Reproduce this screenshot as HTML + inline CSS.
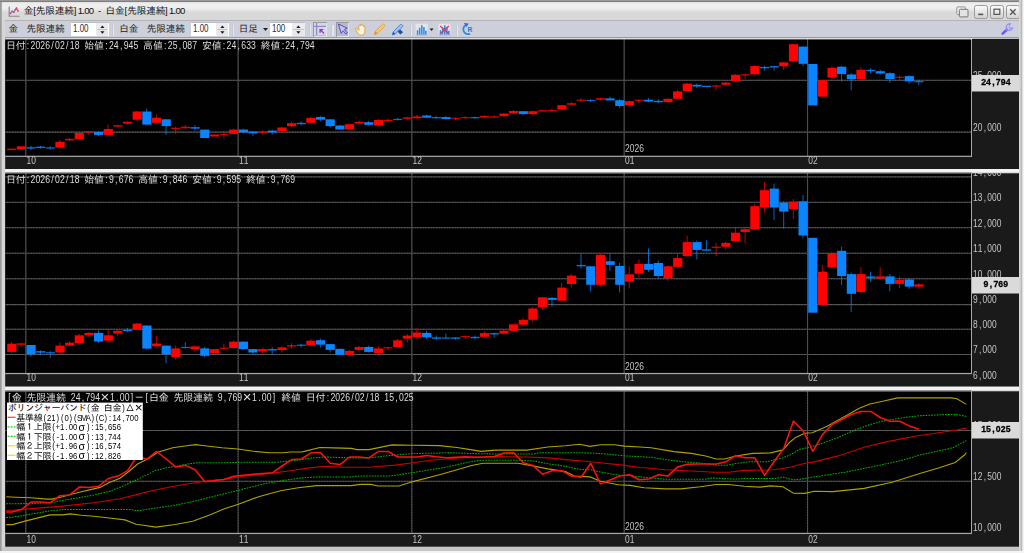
<!DOCTYPE html>
<html lang="ja"><head><meta charset="utf-8"><title>金[先限連続]1.00 - 白金[先限連続]1.00</title>
<style>
html,body{margin:0;padding:0}
body{width:1024px;height:553px;position:relative;overflow:hidden;background:#f4f4f4;font-family:"Liberation Sans","IPAGothic","Noto Sans CJK JP",sans-serif}
#win{position:absolute;left:0;top:0;width:1022.6px;height:550.8px;background:#d6d6d6;box-shadow:inset 1.7px 1.7px 0 #9a9a9a}
#win:after{content:"";position:absolute;right:0;top:0;bottom:0;width:3.6px;background:linear-gradient(90deg,#d8d8d8 0,#d4d4d4 35%,#a8a8a8 50%,#b8b8b8 62%,#dcdcdc 80%,#e6e6e6)}
#botb{position:absolute;left:1.7px;right:0;bottom:0;height:4px;background:#c6c6c6}
#title{position:absolute;left:1.7px;top:2px;width:1020.9px;height:17.8px;background:linear-gradient(#dcdcdc 0,#ececec 1.2px,#f0f0f0 5px,#eaeaea 7px,#d9d9d9 10.5px,#d8d8d8 100%)}
#topb{position:absolute;left:0;top:0;width:100%;height:2.1px;background:linear-gradient(#9c9c9c 0,#989898 45%,#7e7e7e 60%,#808080 90%,#b0b0b0)}
#tbar{position:absolute;left:4.5px;top:19.7px;width:1014.5px;height:18.2px;background:linear-gradient(#b2b2b4 0,#b6b6b8 0.9px,#cdd0da 1.4px,#cdd0da 17.1px,#909aa8 17.4px,#96a0ae 100%)}
.t{position:absolute;white-space:nowrap;line-height:1}
.m{font-family:"Liberation Mono","IPAGothic",monospace;font-size:9.6px;letter-spacing:-0.96px;color:#d8d8d8}
.m .j{letter-spacing:0}
.hd{color:#e4e4e4}
.ax{color:#c8c8c8;font-size:9.6px}
.ui{font-size:9.6px;color:#202020;letter-spacing:-0.1px}
.pb{position:absolute;left:972px;width:47px;background:#dadada;color:#000;font-family:"Liberation Mono","IPAGothic",monospace;font-weight:bold;font-size:9.8px;letter-spacing:-0.9px;text-align:center}
.lg{position:absolute;left:7px;top:402.6px;width:135.8px;height:57.4px;background:#fff}
.lr{position:absolute;white-space:nowrap;line-height:1;font-family:"Liberation Mono","IPAGothic",monospace;font-size:8.7px;letter-spacing:-0.87px;color:#000}
.lr .j{letter-spacing:0}
.sp{position:absolute;top:22.5px;height:13.4px;background:#fff;box-shadow:0 -0.7px 0 #b4b8c2}
.sp span{position:absolute;left:2.4px;top:0.3px;opacity:0.99;font-size:10.6px;line-height:1;color:#2a2a2a;transform:scaleX(0.75);transform-origin:0 0}
.n{letter-spacing:-0.75px;margin-left:1.3px}
.sb{position:absolute;top:23.5px;width:10.3px;height:11px;background:linear-gradient(#eeeeee 0,#e9e9e9 44%,#c4c4c4 47%,#c4c4c4 53%,#e9e9e9 56%,#e6e6e6 100%);box-shadow:0 0 0 0.5px #d4d4d4}
.sep{position:absolute;top:25.2px;width:1.3px;height:10.4px;background:#e4e7ee;box-shadow:-0.7px 0 0 #c2c6d0}
text.l{font-family:"Liberation Sans","IPAGothic",sans-serif}
text.j{font-family:"Liberation Sans","IPAGothic","Noto Sans CJK JP",sans-serif}
.wb{position:absolute;top:3.2px;width:13.4px;height:13.6px;border:0.8px solid #9a9a9a;border-radius:2.4px;background:linear-gradient(#fbfbfb,#d2d2d2);box-sizing:border-box}
.press{position:absolute;top:21.6px;height:15px;background:#b9bcc4;box-shadow:inset 0.8px 0.8px 0 #8e9098,inset -0.8px -0.8px 0 #eceef2}
</style></head><body>
<div id="win">
<div id="title">
 <svg style="position:absolute;left:6px;top:2.7px" width="13" height="13" viewBox="0 0 13 13"><path d="M1.2 1.5V11.2H11.5" fill="none" stroke="#888" stroke-width="1.15"/><path d="M2.2 8.6L4.2 6.2 5.8 7.2 8.4 3 10 5.8" fill="none" stroke="#3b8be0" stroke-width="1.1"/><g fill="#f0405a"><circle cx="2.4" cy="8.4" r="0.9"/><circle cx="4.2" cy="6.3" r="0.9"/><circle cx="5.8" cy="7.2" r="0.9"/><circle cx="7.3" cy="4.6" r="0.9"/><circle cx="8.5" cy="3.2" r="0.9"/><circle cx="10" cy="5.9" r="0.9"/></g></svg>
 <div class="t ui" id="ttl" style="left:22.1px;top:4.1px;color:#111">金[先限連続]<span class="n">1.00</span><span style="padding:0 1.9px 0 2.1px"> - </span>白金[先限連続]<span class="n">1.00</span></div>
 <svg style="position:absolute;left:954px;top:3.5px" width="14" height="13" viewBox="0 0 14 13"><rect x="0.8" y="0.9" width="8.6" height="7.6" rx="1" fill="#ececec" stroke="#8c8c8c" stroke-width="0.9"/><rect x="3.4" y="3.3" width="8.6" height="7.6" rx="1" fill="#e4e4e4" stroke="#777" stroke-width="1"/></svg>
 <div class="wb" style="left:972.6px"><svg width="12" height="12" style="position:absolute;left:0;top:0"><rect x="3.2" y="7.6" width="5" height="1.6" fill="#555"/></svg></div>
 <div class="wb" style="left:988.6px"><svg width="12" height="12" style="position:absolute;left:0;top:0"><rect x="3" y="3.2" width="5.8" height="5.2" fill="none" stroke="#555" stroke-width="1.2"/></svg></div>
 <div class="wb" style="left:1004.6px"><svg width="12" height="12" style="position:absolute;left:0;top:0"><path d="M3.2 3.2L8.6 8.8M8.6 3.2L3.2 8.8" stroke="#555" stroke-width="1.3"/></svg></div>
</div>
<div id="tbar"></div><div id="topb"></div>
<!-- toolbar items -->
<div class="t ui" style="left:8.6px;top:24.2px">金</div>
<div class="t ui" style="left:26.6px;top:24.2px">先限連続</div>
<div class="sp" style="left:70.8px;width:38px"><span>1.00</span></div>
<div class="sb" style="left:97.2px"><svg width="11" height="11" style="position:absolute;left:0;top:0"><path d="M3.3 4.1L5.4 1.5 7.5 4.1ZM3.3 7.2L5.4 9.8 7.5 7.2Z" fill="#1a1a1a"/></svg></div>
<div class="sep" style="left:113px"></div>
<div class="t ui" style="left:119.2px;top:24.2px">白金</div>
<div class="t ui" style="left:146.8px;top:24.2px">先限連続</div>
<div class="sp" style="left:190.6px;width:38px"><span>1.00</span></div>
<div class="sb" style="left:217px"><svg width="11" height="11" style="position:absolute;left:0;top:0"><path d="M3.3 4.1L5.4 1.5 7.5 4.1ZM3.3 7.2L5.4 9.8 7.5 7.2Z" fill="#1a1a1a"/></svg></div>
<div class="sep" style="left:233px"></div>
<div class="t ui" style="left:238.8px;top:24.2px">日足</div>
<svg style="position:absolute;left:261.5px;top:26.6px" width="7" height="5"><path d="M1 1H6L3.5 4Z" fill="#222"/></svg>
<div class="sp" style="left:270px;width:35px"><span>100</span></div>
<div class="sb" style="left:293.4px"><svg width="11" height="11" style="position:absolute;left:0;top:0"><path d="M3.3 4.1L5.4 1.5 7.5 4.1ZM3.3 7.2L5.4 9.8 7.5 7.2Z" fill="#1a1a1a"/></svg></div>
<div class="sep" style="left:309.6px"></div>
<div class="press" style="left:312.6px;width:14.4px"></div>
<svg style="position:absolute;left:313px;top:22px" width="14" height="14" viewBox="0 0 14 14"><rect x="1" y="1" width="12" height="12" fill="#d6d9e2"/><path d="M3.6 1V13M1 4.4H13" stroke="#8c8ad0" stroke-width="1.3"/><path d="M6.4 7H10.2V8.2H8.6L11.4 11 10.5 11.9 7.7 9.1V10.8H6.4Z" fill="#9a32c8"/></svg>
<div class="sep" style="left:332.4px"></div>
<div class="press" style="left:335.6px;width:13.6px"></div>
<svg style="position:absolute;left:336px;top:22px" width="14" height="14" viewBox="0 0 14 14"><path d="M2.4 2L11.2 6.2 8.4 7.6 11.4 11 10 12.2 7.2 8.8 5.2 11.4Z" fill="#c8c4ee" stroke="#5a48c0" stroke-width="1"/></svg>
<svg style="position:absolute;left:354.2px;top:22.6px" width="13" height="13" viewBox="0 0 15 15"><path d="M3.6 6.8C2.6 5.6 1.4 5.6 1.6 6.8L4.2 11.6C5 13.4 6.4 14 8.2 14 11 14 12.6 12.4 12.6 10V4.6C12.6 3.4 11.2 3.4 11 4.4V3C10.8 1.8 9.4 1.8 9.2 3V2.2C9 1 7.6 1 7.4 2.2V3.2C7.2 2 5.6 2 5.6 3.4V8.4Z" fill="#fff4e2" stroke="#e0a040" stroke-width="1.1"/></svg>
<svg style="position:absolute;left:372.8px;top:22.8px" width="13" height="13" viewBox="0 0 15 15"><path d="M1.6 13.4L2.8 9.6 10.6 1.8C11.4 1 12.4 1.2 13 1.8 13.6 2.4 13.8 3.4 13 4.2L5.2 12Z" fill="#f6c878" stroke="#e09a30" stroke-width="0.9"/><path d="M1.6 13.4L2.8 9.6 5.2 12Z" fill="#c89050"/></svg>
<svg style="position:absolute;left:391px;top:22.6px" width="14" height="13.2" viewBox="0 0 16 15"><path d="M1.4 13.6L2.6 10 10.2 2.2C11 1.4 12.2 1.6 12.8 2.2 13.4 2.8 13.6 3.8 12.8 4.6L5 12.4Z" fill="#9cc0f0" stroke="#3a78d0" stroke-width="0.9"/><path d="M7.6 9.6L10.6 7.4 13.8 10.6 10.6 13Z" fill="#244c98"/><path d="M1.4 13.6L2.6 10 5 12.4Z" fill="#2c5cb0"/></svg>
<div class="sep" style="left:410.5px"></div>
<svg style="position:absolute;left:415px;top:22.6px" width="13.4" height="13.4" viewBox="0 0 15 15"><rect x="0.6" y="0.8" width="13.6" height="13.2" fill="#e2e5ec"/><path d="M1 13.4H14" stroke="#9a9ca4" stroke-width="0.9"/><path d="M2.8 8V13M5.2 5.2V13M7.6 2.4V13M10 4.6V13M12.2 8.6V13" stroke="#2a8af0" stroke-width="1.7"/></svg>
<svg style="position:absolute;left:428.8px;top:27.6px" width="6" height="4"><path d="M0.6 0.6H4.6L2.6 3Z" fill="#222"/></svg>
<svg style="position:absolute;left:437.6px;top:22.6px" width="13.4" height="13.4" viewBox="0 0 15 15"><rect x="0.6" y="0.8" width="13.6" height="13.2" fill="#e2e5ec"/><path d="M1 13.4H14" stroke="#9a9ca4" stroke-width="0.9"/><path d="M2.8 8V13M5.2 5.2V13M7.6 2.4V13M10 4.6V13M12.2 8.6V13" stroke="#2a8af0" stroke-width="1.7"/><path d="M2.4 3.4L12.2 12M12.2 3.4L2.4 12" stroke="#f03048" stroke-width="1.3"/></svg>
<div class="sep" style="left:456.5px"></div>
<svg style="position:absolute;left:460.6px;top:21.8px" width="14" height="14" viewBox="0 0 16 16"><path d="M5.8 3.4A5.4 5.4 0 1 0 10.4 13.4" fill="none" stroke="#2a8ae0" stroke-width="2.1"/><path d="M3.2 1L8.8 1.6 6.4 5.8Z" fill="#2a6ae0"/><text x="7.4" y="11.4" font-family="Liberation Sans,sans-serif" font-weight="bold" font-size="7.6" fill="#1a7ad0">R</text></svg>
<svg style="position:absolute;left:1000px;top:22px" width="15" height="15" viewBox="0 0 15 15"><path d="M2.6 11.6L6.8 7.8" stroke="#6658f6" stroke-width="2.5" stroke-linecap="round"/><path d="M6 8.4L7.6 6.6" stroke="#8f86f8" stroke-width="2.6"/><path d="M10.9 1.9A3.5 3.5 0 1 0 13 5.6L10.7 6.2 9 4.6 9.6 2.2Z" fill="#a8a0fa" stroke="#8278f6" stroke-width="0.6"/><path d="M8.2 3.2L7.9 5.6 9.6 7.2" fill="none" stroke="#f0eeff" stroke-width="0.8"/></svg>

<svg style="position:absolute;left:0;top:0;opacity:0.999" width="1024" height="553" viewBox="0 0 1024 553">
<rect x="5.2" y="38.9" width="1013.8" height="130.1" fill="#1a1a1a"/>
<rect x="5.5" y="38.1" width="966.0" height="118.20000000000002" fill="#000"/>
<line x1="5.5" y1="80.3" x2="971.5" y2="80.3" stroke="#3e3e3e" stroke-width="1.1"/>
<line x1="5.5" y1="80.3" x2="971.5" y2="80.3" stroke="#7c7c7c" stroke-width="0.8" stroke-dasharray="0.8 0.8"/>
<line x1="5.5" y1="132.1" x2="971.5" y2="132.1" stroke="#3e3e3e" stroke-width="1.1"/>
<line x1="5.5" y1="132.1" x2="971.5" y2="132.1" stroke="#7c7c7c" stroke-width="0.8" stroke-dasharray="0.8 0.8"/>
<line x1="25.802" y1="38.1" x2="25.802" y2="156.3" stroke="#3a3a3a" stroke-width="1.2"/>
<line x1="25.802" y1="38.1" x2="25.802" y2="156.3" stroke="#707070" stroke-width="0.8" stroke-dasharray="0.8 0.8"/>
<line x1="238.124" y1="38.1" x2="238.124" y2="156.3" stroke="#3a3a3a" stroke-width="1.2"/>
<line x1="238.124" y1="38.1" x2="238.124" y2="156.3" stroke="#707070" stroke-width="0.8" stroke-dasharray="0.8 0.8"/>
<line x1="411.842" y1="38.1" x2="411.842" y2="156.3" stroke="#3a3a3a" stroke-width="1.2"/>
<line x1="411.842" y1="38.1" x2="411.842" y2="156.3" stroke="#707070" stroke-width="0.8" stroke-dasharray="0.8 0.8"/>
<line x1="624.164" y1="38.1" x2="624.164" y2="156.3" stroke="#3a3a3a" stroke-width="1.2"/>
<line x1="624.164" y1="38.1" x2="624.164" y2="156.3" stroke="#707070" stroke-width="0.8" stroke-dasharray="0.8 0.8"/>
<line x1="807.533" y1="38.1" x2="807.533" y2="156.3" stroke="#3a3a3a" stroke-width="1.2"/>
<line x1="807.533" y1="38.1" x2="807.533" y2="156.3" stroke="#707070" stroke-width="0.8" stroke-dasharray="0.8 0.8"/>
<rect x="7.2" y="148.6" width="9.20" height="1.6" fill="#ff0000" opacity="0.88"/>
<rect x="16.8" y="146.3" width="9.20" height="3.1" fill="#ff0000"/>
<line x1="30.9" y1="145.9" x2="30.9" y2="150.2" stroke="#0a84ff" stroke-width="0.9" opacity="0.85"/>
<rect x="26.5" y="147.2" width="9.20" height="1.4" fill="#0a84ff" opacity="0.88"/>
<line x1="40.5" y1="145.9" x2="40.5" y2="148.6" stroke="#0a84ff" stroke-width="0.9" opacity="0.85"/>
<rect x="36.1" y="146.6" width="9.20" height="1.4" fill="#0a84ff" opacity="0.88"/>
<line x1="50.2" y1="146.3" x2="50.2" y2="149.6" stroke="#0a84ff" stroke-width="0.9" opacity="0.85"/>
<rect x="45.8" y="147.3" width="9.20" height="1.3" fill="#0a84ff" opacity="0.78"/>
<line x1="59.8" y1="139.8" x2="59.8" y2="148.6" stroke="#ff0000" stroke-width="0.9" opacity="0.85"/>
<rect x="55.4" y="141.8" width="9.20" height="5.8" fill="#ff0000"/>
<line x1="69.5" y1="138.2" x2="69.5" y2="141.2" stroke="#ff0000" stroke-width="0.9" opacity="0.85"/>
<rect x="65.1" y="138.8" width="9.20" height="1.6" fill="#ff0000" opacity="0.88"/>
<rect x="74.7" y="133.0" width="9.20" height="6.4" fill="#ff0000"/>
<line x1="88.8" y1="131.0" x2="88.8" y2="134.5" stroke="#ff0000" stroke-width="0.9" opacity="0.85"/>
<rect x="84.4" y="131.3" width="9.20" height="1.3" fill="#ff0000" opacity="0.78"/>
<line x1="98.4" y1="131.0" x2="98.4" y2="135.9" stroke="#0a84ff" stroke-width="0.9" opacity="0.85"/>
<rect x="94.0" y="132.0" width="9.20" height="2.9" fill="#0a84ff"/>
<line x1="108.1" y1="124.8" x2="108.1" y2="134.9" stroke="#ff0000" stroke-width="0.9" opacity="0.85"/>
<rect x="103.7" y="129.0" width="9.20" height="5.9" fill="#ff0000"/>
<line x1="117.7" y1="124.8" x2="117.7" y2="127.5" stroke="#ff0000" stroke-width="0.9" opacity="0.85"/>
<rect x="113.3" y="125.2" width="9.20" height="1.5" fill="#ff0000" opacity="0.88"/>
<line x1="127.4" y1="121.3" x2="127.4" y2="124.8" stroke="#ff0000" stroke-width="0.9" opacity="0.85"/>
<rect x="123.0" y="121.8" width="9.20" height="1.8" fill="#ff0000"/>
<line x1="137.0" y1="111.0" x2="137.0" y2="121.6" stroke="#ff0000" stroke-width="0.9" opacity="0.85"/>
<rect x="132.6" y="111.5" width="9.20" height="8.2" fill="#ff0000"/>
<line x1="146.7" y1="108.5" x2="146.7" y2="124.6" stroke="#0a84ff" stroke-width="0.9" opacity="0.85"/>
<rect x="142.3" y="111.5" width="9.20" height="13.1" fill="#0a84ff"/>
<line x1="156.3" y1="114.4" x2="156.3" y2="122.8" stroke="#ff0000" stroke-width="0.9" opacity="0.85"/>
<rect x="151.9" y="117.7" width="9.20" height="5.1" fill="#ff0000"/>
<line x1="166.0" y1="119.3" x2="166.0" y2="134.9" stroke="#0a84ff" stroke-width="0.9" opacity="0.85"/>
<rect x="161.6" y="119.3" width="9.20" height="6.8" fill="#0a84ff"/>
<line x1="175.6" y1="127.0" x2="175.6" y2="134.0" stroke="#ff0000" stroke-width="0.9" opacity="0.85"/>
<rect x="171.2" y="127.7" width="9.20" height="1.3" fill="#ff0000" opacity="0.78"/>
<line x1="185.3" y1="124.8" x2="185.3" y2="128.7" stroke="#ff0000" stroke-width="0.9" opacity="0.85"/>
<rect x="180.9" y="126.7" width="9.20" height="1.6" fill="#ff0000" opacity="0.88"/>
<line x1="194.9" y1="125.2" x2="194.9" y2="130.6" stroke="#0a84ff" stroke-width="0.9" opacity="0.85"/>
<rect x="190.5" y="127.1" width="9.20" height="1.6" fill="#0a84ff" opacity="0.88"/>
<rect x="200.2" y="129.6" width="9.20" height="8.4" fill="#0a84ff"/>
<rect x="209.8" y="134.5" width="9.20" height="2.0" fill="#ff0000"/>
<line x1="223.9" y1="131.0" x2="223.9" y2="138.4" stroke="#ff0000" stroke-width="0.9" opacity="0.85"/>
<rect x="219.5" y="134.0" width="9.20" height="1.3" fill="#ff0000" opacity="0.78"/>
<line x1="233.5" y1="129.0" x2="233.5" y2="133.9" stroke="#ff0000" stroke-width="0.9" opacity="0.85"/>
<rect x="229.1" y="129.6" width="9.20" height="4.3" fill="#ff0000"/>
<line x1="243.2" y1="128.7" x2="243.2" y2="133.4" stroke="#0a84ff" stroke-width="0.9" opacity="0.85"/>
<rect x="238.8" y="129.6" width="9.20" height="2.8" fill="#0a84ff"/>
<line x1="252.9" y1="131.0" x2="252.9" y2="135.9" stroke="#0a84ff" stroke-width="0.9" opacity="0.85"/>
<rect x="248.4" y="131.6" width="9.20" height="1.8" fill="#0a84ff"/>
<line x1="262.5" y1="130.6" x2="262.5" y2="134.5" stroke="#ff0000" stroke-width="0.9" opacity="0.85"/>
<rect x="258.1" y="131.5" width="9.20" height="1.3" fill="#ff0000" opacity="0.78"/>
<line x1="272.2" y1="130.0" x2="272.2" y2="134.5" stroke="#0a84ff" stroke-width="0.9" opacity="0.85"/>
<rect x="267.7" y="130.6" width="9.20" height="1.8" fill="#0a84ff"/>
<line x1="281.8" y1="126.7" x2="281.8" y2="132.6" stroke="#ff0000" stroke-width="0.9" opacity="0.85"/>
<rect x="277.4" y="127.5" width="9.20" height="3.5" fill="#ff0000"/>
<line x1="291.5" y1="121.3" x2="291.5" y2="127.1" stroke="#ff0000" stroke-width="0.9" opacity="0.85"/>
<rect x="287.0" y="123.2" width="9.20" height="3.1" fill="#ff0000"/>
<line x1="301.1" y1="121.3" x2="301.1" y2="125.2" stroke="#0a84ff" stroke-width="0.9" opacity="0.85"/>
<rect x="296.7" y="122.8" width="9.20" height="1.4" fill="#0a84ff" opacity="0.88"/>
<line x1="310.8" y1="117.0" x2="310.8" y2="123.2" stroke="#ff0000" stroke-width="0.9" opacity="0.85"/>
<rect x="306.3" y="117.9" width="9.20" height="4.9" fill="#ff0000"/>
<line x1="320.4" y1="115.8" x2="320.4" y2="121.3" stroke="#0a84ff" stroke-width="0.9" opacity="0.85"/>
<rect x="316.0" y="117.0" width="9.20" height="2.7" fill="#0a84ff"/>
<line x1="330.1" y1="119.3" x2="330.1" y2="127.5" stroke="#0a84ff" stroke-width="0.9" opacity="0.85"/>
<rect x="325.6" y="119.3" width="9.20" height="6.8" fill="#0a84ff"/>
<line x1="339.7" y1="124.8" x2="339.7" y2="129.5" stroke="#0a84ff" stroke-width="0.9" opacity="0.85"/>
<rect x="335.3" y="125.5" width="9.20" height="4.0" fill="#0a84ff"/>
<rect x="344.9" y="124.2" width="9.20" height="5.3" fill="#ff0000"/>
<line x1="359.0" y1="120.9" x2="359.0" y2="124.8" stroke="#ff0000" stroke-width="0.9" opacity="0.85"/>
<rect x="354.6" y="121.8" width="9.20" height="1.8" fill="#ff0000"/>
<line x1="368.7" y1="120.9" x2="368.7" y2="125.5" stroke="#0a84ff" stroke-width="0.9" opacity="0.85"/>
<rect x="364.2" y="122.2" width="9.20" height="2.6" fill="#0a84ff"/>
<line x1="378.3" y1="118.9" x2="378.3" y2="126.1" stroke="#ff0000" stroke-width="0.9" opacity="0.85"/>
<rect x="373.9" y="119.9" width="9.20" height="5.6" fill="#ff0000"/>
<line x1="388.0" y1="118.8" x2="388.0" y2="122.3" stroke="#ff0000" stroke-width="0.9" opacity="0.85"/>
<rect x="383.5" y="119.8" width="9.20" height="1.4" fill="#ff0000" opacity="0.88"/>
<line x1="397.6" y1="118.0" x2="397.6" y2="120.4" stroke="#0a84ff" stroke-width="0.9" opacity="0.85"/>
<rect x="393.2" y="118.8" width="9.20" height="1.3" fill="#0a84ff" opacity="0.78"/>
<line x1="407.3" y1="116.9" x2="407.3" y2="119.8" stroke="#ff0000" stroke-width="0.9" opacity="0.85"/>
<rect x="402.8" y="117.3" width="9.20" height="1.5" fill="#ff0000" opacity="0.88"/>
<line x1="416.9" y1="114.9" x2="416.9" y2="118.8" stroke="#ff0000" stroke-width="0.9" opacity="0.85"/>
<rect x="412.5" y="116.5" width="9.20" height="1.7" fill="#ff0000"/>
<line x1="426.6" y1="114.9" x2="426.6" y2="118.0" stroke="#0a84ff" stroke-width="0.9" opacity="0.85"/>
<rect x="422.1" y="115.5" width="9.20" height="2.2" fill="#0a84ff"/>
<line x1="436.2" y1="115.9" x2="436.2" y2="118.8" stroke="#0a84ff" stroke-width="0.9" opacity="0.85"/>
<rect x="431.8" y="117.0" width="9.20" height="1.3" fill="#0a84ff" opacity="0.78"/>
<line x1="445.9" y1="115.9" x2="445.9" y2="119.8" stroke="#0a84ff" stroke-width="0.9" opacity="0.85"/>
<rect x="441.4" y="117.1" width="9.20" height="1.9" fill="#0a84ff"/>
<line x1="455.5" y1="117.5" x2="455.5" y2="120.0" stroke="#ff0000" stroke-width="0.9" opacity="0.85"/>
<rect x="451.1" y="117.8" width="9.20" height="1.3" fill="#ff0000" opacity="0.78"/>
<line x1="465.2" y1="116.1" x2="465.2" y2="118.8" stroke="#ff0000" stroke-width="0.9" opacity="0.85"/>
<rect x="460.7" y="117.0" width="9.20" height="1.3" fill="#ff0000" opacity="0.78"/>
<line x1="474.8" y1="116.5" x2="474.8" y2="118.8" stroke="#0a84ff" stroke-width="0.9" opacity="0.85"/>
<rect x="470.4" y="117.0" width="9.20" height="1.3" fill="#0a84ff" opacity="0.78"/>
<line x1="484.5" y1="115.5" x2="484.5" y2="118.0" stroke="#ff0000" stroke-width="0.9" opacity="0.85"/>
<rect x="480.0" y="115.9" width="9.20" height="1.6" fill="#ff0000" opacity="0.88"/>
<line x1="494.1" y1="115.3" x2="494.1" y2="117.9" stroke="#ff0000" stroke-width="0.9" opacity="0.85"/>
<rect x="489.7" y="116.3" width="9.20" height="1.3" fill="#ff0000" opacity="0.78"/>
<line x1="503.8" y1="113.0" x2="503.8" y2="117.3" stroke="#ff0000" stroke-width="0.9" opacity="0.85"/>
<rect x="499.4" y="113.6" width="9.20" height="2.5" fill="#ff0000"/>
<line x1="513.4" y1="110.0" x2="513.4" y2="113.9" stroke="#ff0000" stroke-width="0.9" opacity="0.85"/>
<rect x="509.0" y="111.0" width="9.20" height="2.4" fill="#ff0000"/>
<line x1="523.1" y1="111.2" x2="523.1" y2="114.9" stroke="#0a84ff" stroke-width="0.9" opacity="0.85"/>
<rect x="518.7" y="111.2" width="9.20" height="2.9" fill="#0a84ff"/>
<line x1="532.7" y1="110.6" x2="532.7" y2="114.9" stroke="#ff0000" stroke-width="0.9" opacity="0.85"/>
<rect x="528.3" y="111.2" width="9.20" height="2.9" fill="#ff0000"/>
<rect x="538.0" y="110.2" width="9.20" height="1.4" fill="#ff0000" opacity="0.88"/>
<line x1="552.0" y1="108.7" x2="552.0" y2="111.8" stroke="#ff0000" stroke-width="0.9" opacity="0.85"/>
<rect x="547.6" y="109.9" width="9.20" height="1.3" fill="#ff0000" opacity="0.78"/>
<line x1="561.7" y1="104.8" x2="561.7" y2="110.2" stroke="#ff0000" stroke-width="0.9" opacity="0.85"/>
<rect x="557.3" y="105.2" width="9.20" height="4.3" fill="#ff0000"/>
<line x1="571.3" y1="101.8" x2="571.3" y2="105.2" stroke="#ff0000" stroke-width="0.9" opacity="0.85"/>
<rect x="566.9" y="103.2" width="9.20" height="1.6" fill="#ff0000" opacity="0.88"/>
<line x1="581.0" y1="98.4" x2="581.0" y2="101.2" stroke="#ff0000" stroke-width="0.9" opacity="0.85"/>
<rect x="576.6" y="99.6" width="9.20" height="1.3" fill="#ff0000" opacity="0.78"/>
<line x1="590.6" y1="99.2" x2="590.6" y2="102.0" stroke="#0a84ff" stroke-width="0.9" opacity="0.85"/>
<rect x="586.2" y="99.9" width="9.20" height="1.3" fill="#0a84ff" opacity="0.78"/>
<line x1="600.3" y1="97.7" x2="600.3" y2="100.4" stroke="#ff0000" stroke-width="0.9" opacity="0.85"/>
<rect x="595.9" y="98.2" width="9.20" height="1.6" fill="#ff0000" opacity="0.88"/>
<line x1="609.9" y1="96.5" x2="609.9" y2="100.4" stroke="#0a84ff" stroke-width="0.9" opacity="0.85"/>
<rect x="605.5" y="98.4" width="9.20" height="2.0" fill="#0a84ff"/>
<line x1="619.6" y1="99.2" x2="619.6" y2="108.0" stroke="#0a84ff" stroke-width="0.9" opacity="0.85"/>
<rect x="615.2" y="100.2" width="9.20" height="5.8" fill="#0a84ff"/>
<line x1="629.2" y1="100.4" x2="629.2" y2="107.0" stroke="#ff0000" stroke-width="0.9" opacity="0.85"/>
<rect x="624.8" y="101.2" width="9.20" height="4.1" fill="#ff0000"/>
<line x1="638.9" y1="99.8" x2="638.9" y2="103.1" stroke="#ff0000" stroke-width="0.9" opacity="0.85"/>
<rect x="634.5" y="99.6" width="9.20" height="1.3" fill="#ff0000" opacity="0.78"/>
<line x1="648.5" y1="98.0" x2="648.5" y2="102.0" stroke="#0a84ff" stroke-width="0.9" opacity="0.85"/>
<rect x="644.1" y="99.8" width="9.20" height="1.8" fill="#0a84ff"/>
<line x1="658.2" y1="99.2" x2="658.2" y2="103.1" stroke="#0a84ff" stroke-width="0.9" opacity="0.85"/>
<rect x="653.8" y="100.8" width="9.20" height="1.5" fill="#0a84ff" opacity="0.88"/>
<line x1="667.8" y1="98.4" x2="667.8" y2="102.7" stroke="#ff0000" stroke-width="0.9" opacity="0.85"/>
<rect x="663.4" y="98.8" width="9.20" height="3.3" fill="#ff0000"/>
<line x1="677.5" y1="90.2" x2="677.5" y2="98.8" stroke="#ff0000" stroke-width="0.9" opacity="0.85"/>
<rect x="673.1" y="91.4" width="9.20" height="7.4" fill="#ff0000"/>
<line x1="687.1" y1="83.2" x2="687.1" y2="91.4" stroke="#ff0000" stroke-width="0.9" opacity="0.85"/>
<rect x="682.7" y="83.6" width="9.20" height="7.4" fill="#ff0000"/>
<line x1="696.8" y1="83.6" x2="696.8" y2="87.9" stroke="#0a84ff" stroke-width="0.9" opacity="0.85"/>
<rect x="692.4" y="84.8" width="9.20" height="1.7" fill="#0a84ff"/>
<rect x="702.0" y="85.7" width="9.20" height="1.4" fill="#0a84ff" opacity="0.88"/>
<line x1="716.1" y1="84.8" x2="716.1" y2="90.4" stroke="#ff0000" stroke-width="0.9" opacity="0.85"/>
<rect x="711.7" y="85.4" width="9.20" height="1.3" fill="#ff0000" opacity="0.78"/>
<line x1="725.7" y1="81.8" x2="725.7" y2="85.5" stroke="#ff0000" stroke-width="0.9" opacity="0.85"/>
<rect x="721.3" y="82.6" width="9.20" height="2.2" fill="#ff0000"/>
<line x1="735.4" y1="73.8" x2="735.4" y2="82.0" stroke="#ff0000" stroke-width="0.9" opacity="0.85"/>
<rect x="731.0" y="74.8" width="9.20" height="6.5" fill="#ff0000"/>
<line x1="745.1" y1="73.8" x2="745.1" y2="79.3" stroke="#ff0000" stroke-width="0.9" opacity="0.85"/>
<rect x="740.6" y="74.2" width="9.20" height="1.3" fill="#ff0000" opacity="0.78"/>
<line x1="754.7" y1="65.2" x2="754.7" y2="75.8" stroke="#ff0000" stroke-width="0.9" opacity="0.85"/>
<rect x="750.3" y="66.0" width="9.20" height="8.2" fill="#ff0000"/>
<line x1="764.4" y1="66.0" x2="764.4" y2="70.7" stroke="#0a84ff" stroke-width="0.9" opacity="0.85"/>
<rect x="759.9" y="66.9" width="9.20" height="1.4" fill="#0a84ff" opacity="0.88"/>
<line x1="774.0" y1="65.7" x2="774.0" y2="70.6" stroke="#0a84ff" stroke-width="0.9" opacity="0.85"/>
<rect x="769.6" y="66.1" width="9.20" height="1.4" fill="#0a84ff" opacity="0.88"/>
<line x1="783.7" y1="61.8" x2="783.7" y2="69.6" stroke="#ff0000" stroke-width="0.9" opacity="0.85"/>
<rect x="779.2" y="62.4" width="9.20" height="3.9" fill="#ff0000"/>
<line x1="793.3" y1="43.9" x2="793.3" y2="61.8" stroke="#ff0000" stroke-width="0.9" opacity="0.85"/>
<rect x="788.9" y="44.2" width="9.20" height="17.2" fill="#ff0000"/>
<line x1="803.0" y1="46.6" x2="803.0" y2="66.3" stroke="#0a84ff" stroke-width="0.9" opacity="0.85"/>
<rect x="798.5" y="46.6" width="9.20" height="17.2" fill="#0a84ff"/>
<rect x="808.2" y="64.0" width="9.20" height="41.4" fill="#0a84ff"/>
<rect x="817.8" y="80.2" width="9.20" height="16.4" fill="#ff0000"/>
<line x1="831.9" y1="66.3" x2="831.9" y2="79.0" stroke="#ff0000" stroke-width="0.9" opacity="0.85"/>
<rect x="827.5" y="67.9" width="9.20" height="9.7" fill="#ff0000"/>
<line x1="841.6" y1="65.7" x2="841.6" y2="81.4" stroke="#0a84ff" stroke-width="0.9" opacity="0.85"/>
<rect x="837.1" y="66.7" width="9.20" height="7.4" fill="#0a84ff"/>
<line x1="851.2" y1="73.2" x2="851.2" y2="90.3" stroke="#0a84ff" stroke-width="0.9" opacity="0.85"/>
<rect x="846.8" y="74.5" width="9.20" height="4.5" fill="#0a84ff"/>
<line x1="860.9" y1="66.9" x2="860.9" y2="79.0" stroke="#ff0000" stroke-width="0.9" opacity="0.85"/>
<rect x="856.4" y="69.8" width="9.20" height="9.2" fill="#ff0000"/>
<line x1="870.5" y1="68.3" x2="870.5" y2="73.2" stroke="#0a84ff" stroke-width="0.9" opacity="0.85"/>
<rect x="866.1" y="69.8" width="9.20" height="1.4" fill="#0a84ff" opacity="0.88"/>
<line x1="880.2" y1="69.8" x2="880.2" y2="74.7" stroke="#0a84ff" stroke-width="0.9" opacity="0.85"/>
<rect x="875.7" y="71.2" width="9.20" height="2.3" fill="#0a84ff"/>
<line x1="889.8" y1="72.2" x2="889.8" y2="82.9" stroke="#0a84ff" stroke-width="0.9" opacity="0.85"/>
<rect x="885.4" y="73.2" width="9.20" height="5.8" fill="#0a84ff"/>
<line x1="899.5" y1="75.1" x2="899.5" y2="79.6" stroke="#ff0000" stroke-width="0.9" opacity="0.85"/>
<rect x="895.0" y="76.7" width="9.20" height="1.3" fill="#ff0000" opacity="0.78"/>
<line x1="909.1" y1="75.1" x2="909.1" y2="83.9" stroke="#0a84ff" stroke-width="0.9" opacity="0.85"/>
<rect x="904.7" y="76.1" width="9.20" height="5.3" fill="#0a84ff"/>
<line x1="918.8" y1="80.0" x2="918.8" y2="84.9" stroke="#0a84ff" stroke-width="0.9" opacity="0.85"/>
<rect x="914.3" y="81.0" width="9.20" height="1.3" fill="#0a84ff" opacity="0.78"/>
<rect x="971.0" y="38.1" width="1" height="118.70000000000002" fill="#a8a8a8"/>
<rect x="5.2" y="155.70000000000002" width="966.8" height="1.25" fill="#a6a6a6"/>
<rect x="5.2" y="38.1" width="966.8" height="1.3" fill="#f0f0f0"/>
<rect x="5.2" y="173.3" width="1013.8" height="213.39999999999998" fill="#1a1a1a"/>
<rect x="5.5" y="172.5" width="966.0" height="201.0" fill="#000"/>
<line x1="5.5" y1="176.9" x2="971.5" y2="176.9" stroke="#3e3e3e" stroke-width="1.1"/>
<line x1="5.5" y1="176.9" x2="971.5" y2="176.9" stroke="#7c7c7c" stroke-width="0.8" stroke-dasharray="0.8 0.8"/>
<line x1="5.5" y1="202.3" x2="971.5" y2="202.3" stroke="#3e3e3e" stroke-width="1.1"/>
<line x1="5.5" y1="202.3" x2="971.5" y2="202.3" stroke="#7c7c7c" stroke-width="0.8" stroke-dasharray="0.8 0.8"/>
<line x1="5.5" y1="227.7" x2="971.5" y2="227.7" stroke="#3e3e3e" stroke-width="1.1"/>
<line x1="5.5" y1="227.7" x2="971.5" y2="227.7" stroke="#7c7c7c" stroke-width="0.8" stroke-dasharray="0.8 0.8"/>
<line x1="5.5" y1="253.2" x2="971.5" y2="253.2" stroke="#3e3e3e" stroke-width="1.1"/>
<line x1="5.5" y1="253.2" x2="971.5" y2="253.2" stroke="#7c7c7c" stroke-width="0.8" stroke-dasharray="0.8 0.8"/>
<line x1="5.5" y1="278.8" x2="971.5" y2="278.8" stroke="#3e3e3e" stroke-width="1.1"/>
<line x1="5.5" y1="278.8" x2="971.5" y2="278.8" stroke="#7c7c7c" stroke-width="0.8" stroke-dasharray="0.8 0.8"/>
<line x1="5.5" y1="304.6" x2="971.5" y2="304.6" stroke="#3e3e3e" stroke-width="1.1"/>
<line x1="5.5" y1="304.6" x2="971.5" y2="304.6" stroke="#7c7c7c" stroke-width="0.8" stroke-dasharray="0.8 0.8"/>
<line x1="5.5" y1="329.2" x2="971.5" y2="329.2" stroke="#3e3e3e" stroke-width="1.1"/>
<line x1="5.5" y1="329.2" x2="971.5" y2="329.2" stroke="#7c7c7c" stroke-width="0.8" stroke-dasharray="0.8 0.8"/>
<line x1="5.5" y1="354.5" x2="971.5" y2="354.5" stroke="#3e3e3e" stroke-width="1.1"/>
<line x1="5.5" y1="354.5" x2="971.5" y2="354.5" stroke="#7c7c7c" stroke-width="0.8" stroke-dasharray="0.8 0.8"/>
<line x1="25.802" y1="172.5" x2="25.802" y2="373.5" stroke="#3a3a3a" stroke-width="1.2"/>
<line x1="25.802" y1="172.5" x2="25.802" y2="373.5" stroke="#707070" stroke-width="0.8" stroke-dasharray="0.8 0.8"/>
<line x1="238.124" y1="172.5" x2="238.124" y2="373.5" stroke="#3a3a3a" stroke-width="1.2"/>
<line x1="238.124" y1="172.5" x2="238.124" y2="373.5" stroke="#707070" stroke-width="0.8" stroke-dasharray="0.8 0.8"/>
<line x1="411.842" y1="172.5" x2="411.842" y2="373.5" stroke="#3a3a3a" stroke-width="1.2"/>
<line x1="411.842" y1="172.5" x2="411.842" y2="373.5" stroke="#707070" stroke-width="0.8" stroke-dasharray="0.8 0.8"/>
<line x1="624.164" y1="172.5" x2="624.164" y2="373.5" stroke="#3a3a3a" stroke-width="1.2"/>
<line x1="624.164" y1="172.5" x2="624.164" y2="373.5" stroke="#707070" stroke-width="0.8" stroke-dasharray="0.8 0.8"/>
<line x1="807.533" y1="172.5" x2="807.533" y2="373.5" stroke="#3a3a3a" stroke-width="1.2"/>
<line x1="807.533" y1="172.5" x2="807.533" y2="373.5" stroke="#707070" stroke-width="0.8" stroke-dasharray="0.8 0.8"/>
<line x1="11.6" y1="342.1" x2="11.6" y2="353.4" stroke="#ff0000" stroke-width="0.9" opacity="0.85"/>
<rect x="7.2" y="343.7" width="9.20" height="8.2" fill="#ff0000"/>
<line x1="21.2" y1="343.3" x2="21.2" y2="347.0" stroke="#ff0000" stroke-width="0.9" opacity="0.85"/>
<rect x="16.8" y="343.3" width="9.20" height="1.5" fill="#ff0000" opacity="0.88"/>
<line x1="30.9" y1="345.0" x2="30.9" y2="356.8" stroke="#0a84ff" stroke-width="0.9" opacity="0.85"/>
<rect x="26.5" y="345.0" width="9.20" height="9.2" fill="#0a84ff"/>
<line x1="40.5" y1="350.3" x2="40.5" y2="355.4" stroke="#0a84ff" stroke-width="0.9" opacity="0.85"/>
<rect x="36.1" y="351.1" width="9.20" height="1.6" fill="#0a84ff" opacity="0.88"/>
<line x1="50.2" y1="350.9" x2="50.2" y2="357.7" stroke="#0a84ff" stroke-width="0.9" opacity="0.85"/>
<rect x="45.8" y="352.1" width="9.20" height="1.3" fill="#0a84ff" opacity="0.78"/>
<line x1="59.8" y1="342.5" x2="59.8" y2="353.0" stroke="#ff0000" stroke-width="0.9" opacity="0.85"/>
<rect x="55.4" y="345.6" width="9.20" height="6.9" fill="#ff0000"/>
<line x1="69.5" y1="341.1" x2="69.5" y2="346.0" stroke="#ff0000" stroke-width="0.9" opacity="0.85"/>
<rect x="65.1" y="342.7" width="9.20" height="2.9" fill="#ff0000"/>
<line x1="79.1" y1="333.9" x2="79.1" y2="344.5" stroke="#ff0000" stroke-width="0.9" opacity="0.85"/>
<rect x="74.7" y="335.3" width="9.20" height="7.8" fill="#ff0000"/>
<line x1="88.8" y1="332.3" x2="88.8" y2="336.6" stroke="#ff0000" stroke-width="0.9" opacity="0.85"/>
<rect x="84.4" y="332.9" width="9.20" height="2.4" fill="#ff0000"/>
<line x1="98.4" y1="330.4" x2="98.4" y2="343.1" stroke="#0a84ff" stroke-width="0.9" opacity="0.85"/>
<rect x="94.0" y="332.9" width="9.20" height="8.6" fill="#0a84ff"/>
<line x1="108.1" y1="329.4" x2="108.1" y2="342.1" stroke="#ff0000" stroke-width="0.9" opacity="0.85"/>
<rect x="103.7" y="335.3" width="9.20" height="5.4" fill="#ff0000"/>
<line x1="117.7" y1="329.4" x2="117.7" y2="335.9" stroke="#ff0000" stroke-width="0.9" opacity="0.85"/>
<rect x="113.3" y="330.8" width="9.20" height="2.7" fill="#ff0000"/>
<line x1="127.4" y1="328.0" x2="127.4" y2="332.0" stroke="#0a84ff" stroke-width="0.9" opacity="0.85"/>
<rect x="123.0" y="329.8" width="9.20" height="1.4" fill="#0a84ff" opacity="0.88"/>
<line x1="137.0" y1="323.0" x2="137.0" y2="330.0" stroke="#ff0000" stroke-width="0.9" opacity="0.85"/>
<rect x="132.6" y="323.6" width="9.20" height="5.8" fill="#ff0000"/>
<line x1="146.7" y1="325.5" x2="146.7" y2="349.5" stroke="#0a84ff" stroke-width="0.9" opacity="0.85"/>
<rect x="142.3" y="325.5" width="9.20" height="23.1" fill="#0a84ff"/>
<line x1="156.3" y1="335.9" x2="156.3" y2="347.0" stroke="#ff0000" stroke-width="0.9" opacity="0.85"/>
<rect x="151.9" y="343.5" width="9.20" height="2.7" fill="#ff0000"/>
<line x1="166.0" y1="345.6" x2="166.0" y2="363.2" stroke="#0a84ff" stroke-width="0.9" opacity="0.85"/>
<rect x="161.6" y="345.6" width="9.20" height="8.6" fill="#0a84ff"/>
<line x1="175.6" y1="345.6" x2="175.6" y2="359.7" stroke="#ff0000" stroke-width="0.9" opacity="0.85"/>
<rect x="171.2" y="348.4" width="9.20" height="8.7" fill="#ff0000"/>
<line x1="185.3" y1="342.1" x2="185.3" y2="348.4" stroke="#0a84ff" stroke-width="0.9" opacity="0.85"/>
<rect x="180.9" y="346.9" width="9.20" height="1.3" fill="#0a84ff" opacity="0.78"/>
<line x1="194.9" y1="345.5" x2="194.9" y2="351.9" stroke="#ff0000" stroke-width="0.9" opacity="0.85"/>
<rect x="190.5" y="346.4" width="9.20" height="2.9" fill="#ff0000"/>
<line x1="204.6" y1="347.0" x2="204.6" y2="357.3" stroke="#0a84ff" stroke-width="0.9" opacity="0.85"/>
<rect x="200.2" y="348.4" width="9.20" height="7.4" fill="#0a84ff"/>
<rect x="209.8" y="349.1" width="9.20" height="4.3" fill="#ff0000"/>
<line x1="223.9" y1="343.7" x2="223.9" y2="350.3" stroke="#ff0000" stroke-width="0.9" opacity="0.85"/>
<rect x="219.5" y="347.6" width="9.20" height="1.3" fill="#ff0000" opacity="0.78"/>
<line x1="233.5" y1="340.7" x2="233.5" y2="348.4" stroke="#ff0000" stroke-width="0.9" opacity="0.85"/>
<rect x="229.1" y="341.7" width="9.20" height="6.3" fill="#ff0000"/>
<line x1="243.2" y1="341.1" x2="243.2" y2="349.9" stroke="#0a84ff" stroke-width="0.9" opacity="0.85"/>
<rect x="238.8" y="341.7" width="9.20" height="7.4" fill="#0a84ff"/>
<line x1="252.9" y1="349.1" x2="252.9" y2="354.8" stroke="#0a84ff" stroke-width="0.9" opacity="0.85"/>
<rect x="248.4" y="349.1" width="9.20" height="3.4" fill="#0a84ff"/>
<line x1="262.5" y1="348.4" x2="262.5" y2="353.4" stroke="#ff0000" stroke-width="0.9" opacity="0.85"/>
<rect x="258.1" y="349.1" width="9.20" height="2.2" fill="#ff0000"/>
<line x1="272.2" y1="347.0" x2="272.2" y2="354.8" stroke="#0a84ff" stroke-width="0.9" opacity="0.85"/>
<rect x="267.7" y="349.0" width="9.20" height="1.5" fill="#0a84ff" opacity="0.88"/>
<line x1="281.8" y1="346.4" x2="281.8" y2="352.5" stroke="#ff0000" stroke-width="0.9" opacity="0.85"/>
<rect x="277.4" y="347.4" width="9.20" height="2.7" fill="#ff0000"/>
<line x1="291.5" y1="343.1" x2="291.5" y2="348.9" stroke="#ff0000" stroke-width="0.9" opacity="0.85"/>
<rect x="287.0" y="345.2" width="9.20" height="1.4" fill="#ff0000" opacity="0.88"/>
<line x1="301.1" y1="343.7" x2="301.1" y2="347.6" stroke="#0a84ff" stroke-width="0.9" opacity="0.85"/>
<rect x="296.7" y="344.6" width="9.20" height="1.3" fill="#0a84ff" opacity="0.78"/>
<line x1="310.8" y1="339.2" x2="310.8" y2="345.4" stroke="#ff0000" stroke-width="0.9" opacity="0.85"/>
<rect x="306.3" y="340.7" width="9.20" height="4.7" fill="#ff0000"/>
<line x1="320.4" y1="338.6" x2="320.4" y2="347.6" stroke="#0a84ff" stroke-width="0.9" opacity="0.85"/>
<rect x="316.0" y="340.2" width="9.20" height="4.4" fill="#0a84ff"/>
<line x1="330.1" y1="344.1" x2="330.1" y2="352.5" stroke="#0a84ff" stroke-width="0.9" opacity="0.85"/>
<rect x="325.6" y="344.1" width="9.20" height="5.8" fill="#0a84ff"/>
<line x1="339.7" y1="348.4" x2="339.7" y2="354.8" stroke="#0a84ff" stroke-width="0.9" opacity="0.85"/>
<rect x="335.3" y="348.9" width="9.20" height="5.9" fill="#0a84ff"/>
<line x1="349.4" y1="349.9" x2="349.4" y2="355.4" stroke="#ff0000" stroke-width="0.9" opacity="0.85"/>
<rect x="344.9" y="350.9" width="9.20" height="3.9" fill="#ff0000"/>
<line x1="359.0" y1="345.6" x2="359.0" y2="351.5" stroke="#ff0000" stroke-width="0.9" opacity="0.85"/>
<rect x="354.6" y="347.0" width="9.20" height="2.9" fill="#ff0000"/>
<line x1="368.7" y1="345.6" x2="368.7" y2="352.5" stroke="#0a84ff" stroke-width="0.9" opacity="0.85"/>
<rect x="364.2" y="347.0" width="9.20" height="4.9" fill="#0a84ff"/>
<line x1="378.3" y1="346.4" x2="378.3" y2="355.2" stroke="#ff0000" stroke-width="0.9" opacity="0.85"/>
<rect x="373.9" y="348.4" width="9.20" height="4.8" fill="#ff0000"/>
<line x1="388.0" y1="346.6" x2="388.0" y2="350.5" stroke="#ff0000" stroke-width="0.9" opacity="0.85"/>
<rect x="383.5" y="347.1" width="9.20" height="1.3" fill="#ff0000" opacity="0.78"/>
<line x1="397.6" y1="338.8" x2="397.6" y2="347.1" stroke="#ff0000" stroke-width="0.9" opacity="0.85"/>
<rect x="393.2" y="340.3" width="9.20" height="6.8" fill="#ff0000"/>
<line x1="407.3" y1="334.1" x2="407.3" y2="342.3" stroke="#ff0000" stroke-width="0.9" opacity="0.85"/>
<rect x="402.8" y="335.6" width="9.20" height="3.0" fill="#ff0000"/>
<line x1="416.9" y1="328.2" x2="416.9" y2="338.8" stroke="#ff0000" stroke-width="0.9" opacity="0.85"/>
<rect x="412.5" y="332.5" width="9.20" height="4.5" fill="#ff0000"/>
<line x1="426.6" y1="330.9" x2="426.6" y2="338.9" stroke="#0a84ff" stroke-width="0.9" opacity="0.85"/>
<rect x="422.1" y="332.9" width="9.20" height="4.5" fill="#0a84ff"/>
<line x1="436.2" y1="335.4" x2="436.2" y2="339.9" stroke="#0a84ff" stroke-width="0.9" opacity="0.85"/>
<rect x="431.8" y="337.4" width="9.20" height="1.4" fill="#0a84ff" opacity="0.88"/>
<line x1="445.9" y1="333.5" x2="445.9" y2="338.6" stroke="#0a84ff" stroke-width="0.9" opacity="0.85"/>
<rect x="441.4" y="337.4" width="9.20" height="1.3" fill="#0a84ff" opacity="0.78"/>
<line x1="455.5" y1="337.4" x2="455.5" y2="339.9" stroke="#0a84ff" stroke-width="0.9" opacity="0.85"/>
<rect x="451.1" y="337.4" width="9.20" height="1.4" fill="#0a84ff" opacity="0.88"/>
<line x1="465.2" y1="335.4" x2="465.2" y2="339.3" stroke="#ff0000" stroke-width="0.9" opacity="0.85"/>
<rect x="460.7" y="336.0" width="9.20" height="1.3" fill="#ff0000" opacity="0.78"/>
<line x1="474.8" y1="335.6" x2="474.8" y2="338.8" stroke="#0a84ff" stroke-width="0.9" opacity="0.85"/>
<rect x="470.4" y="336.8" width="9.20" height="1.4" fill="#0a84ff" opacity="0.88"/>
<line x1="484.5" y1="331.7" x2="484.5" y2="336.8" stroke="#ff0000" stroke-width="0.9" opacity="0.85"/>
<rect x="480.0" y="333.1" width="9.20" height="3.7" fill="#ff0000"/>
<line x1="494.1" y1="332.5" x2="494.1" y2="337.6" stroke="#0a84ff" stroke-width="0.9" opacity="0.85"/>
<rect x="489.7" y="333.1" width="9.20" height="1.4" fill="#0a84ff" opacity="0.88"/>
<line x1="503.8" y1="329.8" x2="503.8" y2="334.5" stroke="#ff0000" stroke-width="0.9" opacity="0.85"/>
<rect x="499.4" y="330.7" width="9.20" height="3.0" fill="#ff0000"/>
<rect x="509.0" y="324.3" width="9.20" height="6.6" fill="#ff0000"/>
<line x1="523.1" y1="317.9" x2="523.1" y2="325.7" stroke="#ff0000" stroke-width="0.9" opacity="0.85"/>
<rect x="518.7" y="319.8" width="9.20" height="4.9" fill="#ff0000"/>
<line x1="532.7" y1="307.1" x2="532.7" y2="322.3" stroke="#ff0000" stroke-width="0.9" opacity="0.85"/>
<rect x="528.3" y="308.5" width="9.20" height="11.3" fill="#ff0000"/>
<line x1="542.4" y1="297.3" x2="542.4" y2="309.6" stroke="#ff0000" stroke-width="0.9" opacity="0.85"/>
<rect x="538.0" y="297.3" width="9.20" height="9.8" fill="#ff0000"/>
<line x1="552.0" y1="297.0" x2="552.0" y2="306.5" stroke="#0a84ff" stroke-width="0.9" opacity="0.85"/>
<rect x="547.6" y="297.9" width="9.20" height="2.0" fill="#0a84ff"/>
<line x1="561.7" y1="282.7" x2="561.7" y2="300.7" stroke="#ff0000" stroke-width="0.9" opacity="0.85"/>
<rect x="557.3" y="287.6" width="9.20" height="13.1" fill="#ff0000"/>
<line x1="571.3" y1="274.0" x2="571.3" y2="287.3" stroke="#ff0000" stroke-width="0.9" opacity="0.85"/>
<rect x="566.9" y="275.6" width="9.20" height="8.4" fill="#ff0000"/>
<line x1="581.0" y1="253.2" x2="581.0" y2="268.4" stroke="#0a84ff" stroke-width="0.9" opacity="0.85"/>
<rect x="576.6" y="264.9" width="9.20" height="1.4" fill="#0a84ff" opacity="0.88"/>
<line x1="590.6" y1="266.3" x2="590.6" y2="291.3" stroke="#0a84ff" stroke-width="0.9" opacity="0.85"/>
<rect x="586.2" y="266.3" width="9.20" height="18.5" fill="#0a84ff"/>
<line x1="600.3" y1="253.6" x2="600.3" y2="286.4" stroke="#ff0000" stroke-width="0.9" opacity="0.85"/>
<rect x="595.9" y="254.8" width="9.20" height="30.0" fill="#ff0000"/>
<line x1="609.9" y1="253.2" x2="609.9" y2="270.8" stroke="#0a84ff" stroke-width="0.9" opacity="0.85"/>
<rect x="605.5" y="261.2" width="9.20" height="3.7" fill="#0a84ff"/>
<line x1="619.6" y1="263.0" x2="619.6" y2="292.3" stroke="#0a84ff" stroke-width="0.9" opacity="0.85"/>
<rect x="615.2" y="265.9" width="9.20" height="18.9" fill="#0a84ff"/>
<line x1="629.2" y1="266.3" x2="629.2" y2="288.4" stroke="#ff0000" stroke-width="0.9" opacity="0.85"/>
<rect x="624.8" y="274.3" width="9.20" height="7.4" fill="#ff0000"/>
<line x1="638.9" y1="259.5" x2="638.9" y2="277.0" stroke="#ff0000" stroke-width="0.9" opacity="0.85"/>
<rect x="634.5" y="263.9" width="9.20" height="9.8" fill="#ff0000"/>
<line x1="648.5" y1="248.3" x2="648.5" y2="271.8" stroke="#0a84ff" stroke-width="0.9" opacity="0.85"/>
<rect x="644.1" y="263.9" width="9.20" height="5.9" fill="#0a84ff"/>
<line x1="658.2" y1="260.4" x2="658.2" y2="278.6" stroke="#0a84ff" stroke-width="0.9" opacity="0.85"/>
<rect x="653.8" y="263.0" width="9.20" height="13.0" fill="#0a84ff"/>
<line x1="667.8" y1="265.3" x2="667.8" y2="280.9" stroke="#ff0000" stroke-width="0.9" opacity="0.85"/>
<rect x="663.4" y="266.3" width="9.20" height="11.9" fill="#ff0000"/>
<line x1="677.5" y1="253.2" x2="677.5" y2="268.4" stroke="#ff0000" stroke-width="0.9" opacity="0.85"/>
<rect x="673.1" y="258.1" width="9.20" height="8.8" fill="#ff0000"/>
<line x1="687.1" y1="235.6" x2="687.1" y2="256.7" stroke="#ff0000" stroke-width="0.9" opacity="0.85"/>
<rect x="682.7" y="242.1" width="9.20" height="14.0" fill="#ff0000"/>
<line x1="696.8" y1="240.5" x2="696.8" y2="259.6" stroke="#0a84ff" stroke-width="0.9" opacity="0.85"/>
<rect x="692.4" y="242.1" width="9.20" height="7.8" fill="#0a84ff"/>
<line x1="706.4" y1="240.1" x2="706.4" y2="250.7" stroke="#0a84ff" stroke-width="0.9" opacity="0.85"/>
<rect x="702.0" y="249.3" width="9.20" height="1.4" fill="#0a84ff" opacity="0.88"/>
<line x1="716.1" y1="242.9" x2="716.1" y2="256.1" stroke="#ff0000" stroke-width="0.9" opacity="0.85"/>
<rect x="711.7" y="246.7" width="9.20" height="1.3" fill="#ff0000" opacity="0.78"/>
<line x1="725.7" y1="241.9" x2="725.7" y2="249.3" stroke="#ff0000" stroke-width="0.9" opacity="0.85"/>
<rect x="721.3" y="242.9" width="9.20" height="3.9" fill="#ff0000"/>
<line x1="735.4" y1="227.8" x2="735.4" y2="242.5" stroke="#ff0000" stroke-width="0.9" opacity="0.85"/>
<rect x="731.0" y="232.7" width="9.20" height="8.4" fill="#ff0000"/>
<line x1="745.1" y1="226.7" x2="745.1" y2="243.5" stroke="#ff0000" stroke-width="0.9" opacity="0.85"/>
<rect x="740.6" y="229.2" width="9.20" height="2.8" fill="#ff0000"/>
<line x1="754.7" y1="204.2" x2="754.7" y2="229.6" stroke="#ff0000" stroke-width="0.9" opacity="0.85"/>
<rect x="750.3" y="206.2" width="9.20" height="23.0" fill="#ff0000"/>
<line x1="764.4" y1="181.8" x2="764.4" y2="212.6" stroke="#ff0000" stroke-width="0.9" opacity="0.85"/>
<rect x="759.9" y="190.2" width="9.20" height="17.3" fill="#ff0000"/>
<line x1="774.0" y1="183.7" x2="774.0" y2="219.9" stroke="#0a84ff" stroke-width="0.9" opacity="0.85"/>
<rect x="769.6" y="188.6" width="9.20" height="18.9" fill="#0a84ff"/>
<line x1="783.7" y1="201.3" x2="783.7" y2="228.6" stroke="#0a84ff" stroke-width="0.9" opacity="0.85"/>
<rect x="779.2" y="202.7" width="9.20" height="8.9" fill="#0a84ff"/>
<line x1="793.3" y1="199.0" x2="793.3" y2="218.9" stroke="#ff0000" stroke-width="0.9" opacity="0.85"/>
<rect x="788.9" y="201.7" width="9.20" height="7.4" fill="#ff0000"/>
<line x1="803.0" y1="195.0" x2="803.0" y2="238.4" stroke="#0a84ff" stroke-width="0.9" opacity="0.85"/>
<rect x="798.5" y="201.3" width="9.20" height="34.2" fill="#0a84ff"/>
<rect x="808.2" y="237.8" width="9.20" height="74.9" fill="#0a84ff"/>
<line x1="822.3" y1="265.0" x2="822.3" y2="304.8" stroke="#ff0000" stroke-width="0.9" opacity="0.85"/>
<rect x="817.8" y="271.7" width="9.20" height="33.1" fill="#ff0000"/>
<line x1="831.9" y1="252.5" x2="831.9" y2="268.6" stroke="#ff0000" stroke-width="0.9" opacity="0.85"/>
<rect x="827.5" y="253.1" width="9.20" height="14.4" fill="#ff0000"/>
<line x1="841.6" y1="246.7" x2="841.6" y2="285.0" stroke="#0a84ff" stroke-width="0.9" opacity="0.85"/>
<rect x="837.1" y="250.8" width="9.20" height="25.3" fill="#0a84ff"/>
<line x1="851.2" y1="272.5" x2="851.2" y2="312.0" stroke="#0a84ff" stroke-width="0.9" opacity="0.85"/>
<rect x="846.8" y="274.1" width="9.20" height="19.7" fill="#0a84ff"/>
<line x1="860.9" y1="267.3" x2="860.9" y2="293.6" stroke="#ff0000" stroke-width="0.9" opacity="0.85"/>
<rect x="856.4" y="274.1" width="9.20" height="17.9" fill="#ff0000"/>
<line x1="870.5" y1="271.7" x2="870.5" y2="281.6" stroke="#0a84ff" stroke-width="0.9" opacity="0.85"/>
<rect x="866.1" y="276.4" width="9.20" height="1.6" fill="#0a84ff" opacity="0.88"/>
<line x1="880.2" y1="267.3" x2="880.2" y2="280.0" stroke="#ff0000" stroke-width="0.9" opacity="0.85"/>
<rect x="875.7" y="276.4" width="9.20" height="2.0" fill="#ff0000"/>
<line x1="889.8" y1="274.0" x2="889.8" y2="291.3" stroke="#0a84ff" stroke-width="0.9" opacity="0.85"/>
<rect x="885.4" y="276.4" width="9.20" height="7.5" fill="#0a84ff"/>
<line x1="899.5" y1="276.4" x2="899.5" y2="288.1" stroke="#ff0000" stroke-width="0.9" opacity="0.85"/>
<rect x="895.0" y="279.8" width="9.20" height="4.1" fill="#ff0000"/>
<line x1="909.1" y1="278.7" x2="909.1" y2="288.9" stroke="#0a84ff" stroke-width="0.9" opacity="0.85"/>
<rect x="904.7" y="279.5" width="9.20" height="7.1" fill="#0a84ff"/>
<line x1="918.8" y1="283.0" x2="918.8" y2="288.9" stroke="#ff0000" stroke-width="0.9" opacity="0.85"/>
<rect x="914.3" y="284.4" width="9.20" height="2.2" fill="#ff0000"/>
<rect x="971.0" y="172.5" width="1" height="201.5" fill="#a8a8a8"/>
<rect x="5.2" y="372.9" width="966.8" height="1.25" fill="#a6a6a6"/>
<rect x="5.2" y="172.5" width="966.8" height="1.0" fill="#a8a8a8"/>
<rect x="5.2" y="391.3" width="1013.8" height="155.40000000000003" fill="#1a1a1a"/>
<rect x="5.5" y="390.5" width="966.0" height="142.89999999999998" fill="#000"/>
<line x1="5.5" y1="430.5" x2="971.5" y2="430.5" stroke="#3e3e3e" stroke-width="1.1"/>
<line x1="5.5" y1="430.5" x2="971.5" y2="430.5" stroke="#7c7c7c" stroke-width="0.8" stroke-dasharray="0.8 0.8"/>
<line x1="5.5" y1="481.3" x2="971.5" y2="481.3" stroke="#3e3e3e" stroke-width="1.1"/>
<line x1="5.5" y1="481.3" x2="971.5" y2="481.3" stroke="#7c7c7c" stroke-width="0.8" stroke-dasharray="0.8 0.8"/>
<line x1="25.802" y1="390.5" x2="25.802" y2="533.4" stroke="#3a3a3a" stroke-width="1.2"/>
<line x1="25.802" y1="390.5" x2="25.802" y2="533.4" stroke="#707070" stroke-width="0.8" stroke-dasharray="0.8 0.8"/>
<line x1="238.124" y1="390.5" x2="238.124" y2="533.4" stroke="#3a3a3a" stroke-width="1.2"/>
<line x1="238.124" y1="390.5" x2="238.124" y2="533.4" stroke="#707070" stroke-width="0.8" stroke-dasharray="0.8 0.8"/>
<line x1="411.842" y1="390.5" x2="411.842" y2="533.4" stroke="#3a3a3a" stroke-width="1.2"/>
<line x1="411.842" y1="390.5" x2="411.842" y2="533.4" stroke="#707070" stroke-width="0.8" stroke-dasharray="0.8 0.8"/>
<line x1="624.164" y1="390.5" x2="624.164" y2="533.4" stroke="#3a3a3a" stroke-width="1.2"/>
<line x1="624.164" y1="390.5" x2="624.164" y2="533.4" stroke="#707070" stroke-width="0.8" stroke-dasharray="0.8 0.8"/>
<line x1="807.533" y1="390.5" x2="807.533" y2="533.4" stroke="#3a3a3a" stroke-width="1.2"/>
<line x1="807.533" y1="390.5" x2="807.533" y2="533.4" stroke="#707070" stroke-width="0.8" stroke-dasharray="0.8 0.8"/>
<polyline fill="none" points="6.3,496.8 15.6,497.2 31.3,497.7 46.9,499.1 51.6,499.1 62.5,496.8 78.1,492.5 93.8,488.9 100.0,487.4 109.4,482.4 120.0,478.3 128.8,471.5 137.6,464.0 148.1,458.8 157.8,452.3 172.7,447.8 186.8,445.7 195.6,444.6 204.4,445.7 222.0,447.8 237.8,449.0 253.6,451.3 269.4,452.7 283.5,452.7 290.5,452.0 302.3,451.9 319.9,447.5 333.9,447.9 351.5,448.4 356.8,449.6 369.1,449.6 392.0,444.9 413.0,445.2 439.4,445.6 457.0,447.5 470.5,449.6 481.1,451.4 495.2,450.1 526.8,450.1 547.9,447.0 565.5,445.7 579.5,444.3 590.0,446.4 600.6,444.7 614.7,444.7 624.4,446.1 640.0,447.0 651.1,447.8 673.9,451.6 691.5,453.4 705.6,456.0 716.1,459.0 724.9,459.0 735.5,456.0 753.0,453.4 770.6,452.9 782.9,449.9 790.0,442.0 795.6,437.4 804.8,433.3 812.3,432.8 827.1,426.3 845.7,416.1 858.7,408.6 869.8,404.0 882.8,401.2 897.6,397.9 951.4,397.9 957.0,398.8 966.3,404.4" stroke="#aea200" stroke-width="1.1"/>
<polyline fill="none" points="6.3,524.6 12.5,524.6 25.0,521.1 50.0,514.9 62.5,514.9 70.3,513.9 81.3,515.2 93.8,516.3 109.4,518.0 125.0,519.9 136.0,524.3 140.0,524.8 155.8,527.1 175.2,524.5 192.7,521.3 210.3,514.8 224.4,508.7 238.4,504.3 259.5,496.4 280.6,490.7 298.2,487.8 316.4,485.6 351.5,485.6 360.3,484.4 370.9,484.4 377.9,486.0 399.0,486.0 413.0,481.6 439.4,474.7 457.0,469.8 470.5,465.8 482.9,463.3 518.0,463.3 530.3,465.4 547.9,468.9 565.5,471.6 574.3,476.0 590.0,476.9 600.6,481.2 618.2,484.8 630.0,485.4 644.1,487.7 665.2,488.9 681.0,488.9 700.3,486.8 716.1,484.5 728.4,484.5 744.3,486.3 760.1,487.1 770.6,485.9 782.9,486.8 793.5,493.3 804.8,493.4 814.1,491.2 832.7,491.6 864.2,488.4 892.1,482.3 919.9,473.6 938.5,468.0 955.2,462.4 964.4,455.0 966.3,452.6" stroke="#aea200" stroke-width="1.1"/>
<polyline fill="none" points="6.3,503.8 31.3,503.5 51.6,502.7 62.5,500.3 78.0,498.0 93.8,494.9 109.4,491.4 120.0,487.3 137.6,479.4 155.2,470.6 165.7,468.0 178.0,465.9 190.3,463.6 199.1,462.7 225.5,462.7 243.0,462.2 278.2,462.2 288.7,461.0 300.0,460.0 307.6,458.4 325.2,457.0 351.5,457.9 369.1,457.9 386.7,455.8 413.0,453.5 439.4,453.1 448.2,452.6 470.0,453.5 495.2,454.0 533.8,454.0 539.1,452.8 583.0,452.8 600.6,453.5 624.4,455.8 640.0,456.7 651.1,457.3 665.2,459.5 682.7,461.7 700.3,463.1 717.9,465.3 726.7,465.3 735.5,463.6 749.5,461.7 767.1,461.7 782.9,457.8 790.0,455.0 799.3,449.5 807.6,447.6 817.8,444.8 836.4,438.3 855.0,430.0 867.9,425.3 882.8,421.1 901.3,417.9 919.9,415.7 944.0,414.6 957.0,414.6 966.3,416.4" stroke="#00b000" stroke-width="1.05" stroke-dasharray="1.7 1.1"/>
<polyline fill="none" points="6.3,517.5 12.5,517.2 25.0,515.2 50.0,510.8 65.6,509.4 93.8,509.4 129.7,509.4 136.0,510.5 140.0,510.4 157.6,507.8 175.2,505.2 192.7,501.6 210.3,497.2 227.9,492.9 245.5,488.5 263.0,484.1 280.6,480.9 298.2,478.3 316.4,476.9 351.5,476.9 360.3,476.0 390.2,476.0 413.0,472.5 430.6,469.8 448.2,466.7 460.0,464.0 470.5,461.9 481.1,460.2 518.0,460.2 533.8,461.0 547.9,463.7 565.5,466.3 579.5,469.3 590.0,469.8 600.6,472.1 618.2,475.1 630.0,475.6 642.3,477.1 665.2,479.2 705.6,479.2 712.6,478.0 735.5,479.2 744.3,478.4 775.9,478.4 782.9,477.1 793.5,479.8 801.1,479.1 817.8,476.3 845.7,472.1 873.5,466.5 901.3,460.6 919.9,455.0 938.5,450.9 953.3,447.6 966.3,440.7" stroke="#00b000" stroke-width="1.05" stroke-dasharray="1.7 1.1"/>
<polyline fill="none" points="6.3,510.5 15.6,510.0 31.3,508.6 62.5,506.1 93.8,502.7 120.0,498.8 137.6,494.4 155.2,490.0 172.7,486.5 190.3,483.5 205.3,481.2 225.5,479.1 243.0,476.3 260.6,474.7 278.2,472.4 290.0,470.7 307.6,468.1 325.2,466.3 342.7,467.2 369.1,467.2 395.5,465.1 413.0,462.8 430.6,460.2 448.2,458.7 470.0,457.2 495.2,456.6 526.8,457.0 547.9,457.9 565.5,459.6 583.0,461.0 600.6,462.8 624.4,465.4 640.0,467.5 647.6,468.0 665.2,469.7 691.5,471.0 714.4,472.2 728.4,472.2 744.3,470.4 774.1,469.7 790.0,467.3 803.0,463.7 814.1,461.9 838.2,455.9 864.2,447.2 882.8,442.6 901.3,438.9 919.9,435.5 938.5,432.8 957.0,430.0 966.3,428.1" stroke="#c80000" stroke-width="1.1"/>
<polyline fill="none" points="6.3,512.0 11.8,512.0 21.4,509.5 31.1,502.0 40.7,501.9 50.4,502.7 60.0,495.7 69.7,494.9 79.3,487.1 89.0,487.4 98.6,486.3 108.3,478.5 117.9,476.1 127.6,470.6 137.2,456.0 146.9,459.3 156.5,451.3 166.2,459.0 175.8,467.1 185.5,465.4 195.1,469.8 204.8,481.7 214.4,480.5 224.1,479.4 233.7,476.3 243.4,475.2 253.1,474.2 262.7,473.5 272.4,472.8 282.0,466.0 291.7,459.6 301.3,459.0 311.0,452.8 320.6,452.8 330.3,463.3 339.9,464.6 349.6,457.0 359.2,457.0 368.9,457.9 378.5,451.4 388.2,451.4 397.8,457.0 407.5,457.0 417.1,457.0 426.8,455.4 436.4,456.7 446.1,457.7 455.7,457.3 465.4,456.7 475.0,457.2 484.7,457.0 494.3,456.4 504.0,453.0 513.6,452.8 523.3,462.8 532.9,465.4 542.6,474.2 552.2,470.8 561.9,470.7 571.5,476.0 581.2,477.2 590.8,463.3 600.5,483.9 610.1,480.0 619.8,476.0 629.4,474.8 639.1,479.8 648.7,478.9 658.4,474.8 668.0,475.9 677.7,466.9 687.3,464.2 697.0,463.9 706.6,463.9 716.3,463.9 725.9,461.8 735.6,455.7 745.3,457.8 754.9,457.8 764.6,475.4 774.2,461.3 783.9,448.1 793.5,421.0 803.2,431.0 812.8,451.3 822.5,434.6 832.1,424.5 841.8,419.5 851.4,414.5 861.1,411.4 870.7,411.4 880.4,417.5 890.0,421.2 899.7,421.2 909.3,425.9 919.0,429.3" stroke="#ff1010" stroke-width="1.55" stroke-linejoin="round"/>
<rect x="971.0" y="390.5" width="1" height="143.39999999999998" fill="#a8a8a8"/>
<rect x="5.2" y="532.8" width="966.8" height="1.25" fill="#a6a6a6"/>
<rect x="5.2" y="390.5" width="966.8" height="1.0" fill="#a8a8a8"/>
<g text-anchor="middle"><text class="j" x="10.90 20.70" y="49.30" font-size="10.0" fill="#dedede" font-weight="normal">日付</text><text class="l" transform="translate(25.60 49.30) scale(0.804 1)" x="3.05 9.14 15.24 21.34 27.43 33.53 39.63 45.72 51.82 57.91 64.01" y="0" font-size="10.8" fill="#dedede" font-weight="normal">:2026/02/18</text><text class="j" x="89.30 99.10" y="49.30" font-size="10.0" fill="#dedede" font-weight="normal">始値</text><text class="l" transform="translate(104.00 49.30) scale(0.804 1)" x="3.05 9.14 15.24 21.34 27.43 33.53 39.63" y="0" font-size="10.8" fill="#dedede" font-weight="normal">:24,945</text><text class="j" x="148.10 157.90" y="49.30" font-size="10.0" fill="#dedede" font-weight="normal">高値</text><text class="l" transform="translate(162.80 49.30) scale(0.804 1)" x="3.05 9.14 15.24 21.34 27.43 33.53 39.63" y="0" font-size="10.8" fill="#dedede" font-weight="normal">:25,087</text><text class="j" x="206.90 216.70" y="49.30" font-size="10.0" fill="#dedede" font-weight="normal">安値</text><text class="l" transform="translate(221.60 49.30) scale(0.804 1)" x="3.05 9.14 15.24 21.34 27.43 33.53 39.63" y="0" font-size="10.8" fill="#dedede" font-weight="normal">:24,633</text><text class="j" x="265.70 275.50" y="49.30" font-size="10.0" fill="#dedede" font-weight="normal">終値</text><text class="l" transform="translate(280.40 49.30) scale(0.804 1)" x="3.05 9.14 15.24 21.34 27.43 33.53 39.63" y="0" font-size="10.8" fill="#dedede" font-weight="normal">:24,794</text>
<text class="j" x="10.90 20.70" y="183.20" font-size="10.0" fill="#dedede" font-weight="normal">日付</text><text class="l" transform="translate(25.60 183.20) scale(0.804 1)" x="3.05 9.14 15.24 21.34 27.43 33.53 39.63 45.72 51.82 57.91 64.01" y="0" font-size="10.8" fill="#dedede" font-weight="normal">:2026/02/18</text><text class="j" x="89.30 99.10" y="183.20" font-size="10.0" fill="#dedede" font-weight="normal">始値</text><text class="l" transform="translate(104.00 183.20) scale(0.804 1)" x="3.05 9.14 15.24 21.34 27.43 33.53" y="0" font-size="10.8" fill="#dedede" font-weight="normal">:9,676</text><text class="j" x="143.20 153.00" y="183.20" font-size="10.0" fill="#dedede" font-weight="normal">高値</text><text class="l" transform="translate(157.90 183.20) scale(0.804 1)" x="3.05 9.14 15.24 21.34 27.43 33.53" y="0" font-size="10.8" fill="#dedede" font-weight="normal">:9,846</text><text class="j" x="197.10 206.90" y="183.20" font-size="10.0" fill="#dedede" font-weight="normal">安値</text><text class="l" transform="translate(211.80 183.20) scale(0.804 1)" x="3.05 9.14 15.24 21.34 27.43 33.53" y="0" font-size="10.8" fill="#dedede" font-weight="normal">:9,595</text><text class="j" x="251.00 260.80" y="183.20" font-size="10.0" fill="#dedede" font-weight="normal">終値</text><text class="l" transform="translate(265.70 183.20) scale(0.804 1)" x="3.05 9.14 15.24 21.34 27.43 33.53" y="0" font-size="10.8" fill="#dedede" font-weight="normal">:9,769</text>
<text class="l" transform="translate(7.00 401.00) scale(0.804 1)" x="3.05" y="0" font-size="10.8" fill="#dedede" font-weight="normal">[</text><text class="j" x="16.80" y="401.00" font-size="10.0" fill="#dedede" font-weight="normal">金</text><text class="j" x="31.50 41.30 51.10 60.90" y="401.00" font-size="10.0" fill="#dedede" font-weight="normal">先限連続</text><text class="l" transform="translate(70.70 401.00) scale(0.804 1)" x="3.05 9.14 15.24 21.34 27.43 33.53" y="0" font-size="10.8" fill="#dedede" font-weight="normal">24,794</text><text class="l" x="105.00" y="402.00" font-size="15.0" fill="#dedede">×</text><text class="l" transform="translate(109.90 401.00) scale(0.804 1)" x="3.05 9.14 15.24 21.34 27.43" y="0" font-size="10.8" fill="#dedede" font-weight="normal">1.00]</text><text class="j" x="139.30" y="401.00" font-size="10.0" fill="#dedede" font-weight="normal">－</text><text class="l" transform="translate(144.20 401.00) scale(0.804 1)" x="3.05" y="0" font-size="10.8" fill="#dedede" font-weight="normal">[</text><text class="j" x="154.00 163.80" y="401.00" font-size="10.0" fill="#dedede" font-weight="normal">白金</text><text class="j" x="178.50 188.30 198.10 207.90" y="401.00" font-size="10.0" fill="#dedede" font-weight="normal">先限連続</text><text class="l" transform="translate(217.70 401.00) scale(0.804 1)" x="3.05 9.14 15.24 21.34 27.43" y="0" font-size="10.8" fill="#dedede" font-weight="normal">9,769</text><text class="l" x="247.10" y="402.00" font-size="15.0" fill="#dedede">×</text><text class="l" transform="translate(252.00 401.00) scale(0.804 1)" x="3.05 9.14 15.24 21.34 27.43" y="0" font-size="10.8" fill="#dedede" font-weight="normal">1.00]</text><text class="j" x="286.30 296.10" y="401.00" font-size="10.0" fill="#dedede" font-weight="normal">終値</text><text class="j" x="310.80 320.60" y="401.00" font-size="10.0" fill="#dedede" font-weight="normal">日付</text><text class="l" transform="translate(325.50 401.00) scale(0.804 1)" x="3.05 9.14 15.24 21.34 27.43 33.53 39.63 45.72 51.82 57.91 64.01" y="0" font-size="10.8" fill="#dedede" font-weight="normal">:2026/02/18</text><text class="l" transform="translate(384.30 401.00) scale(0.804 1)" x="3.05 9.14 15.24 21.34 27.43 33.53" y="0" font-size="10.8" fill="#dedede" font-weight="normal">15,025</text>
<clipPath id="k1"><rect x="972" y="38.9" width="47" height="130.1"/></clipPath><g clip-path="url(#k1)"><text class="l" transform="translate(973.00 79.10) scale(0.833 1)" x="2.85 8.55 14.25 19.95 25.66 31.36" y="0" font-size="10.1" fill="#c4c4c4" font-weight="normal">25,000</text><text class="l" transform="translate(973.00 130.90) scale(0.833 1)" x="2.85 8.55 14.25 19.95 25.66 31.36" y="0" font-size="10.1" fill="#c4c4c4" font-weight="normal">20,000</text></g>
<clipPath id="k2"><rect x="972" y="172.2" width="47" height="214.5"/></clipPath><g clip-path="url(#k2)"><text class="l" transform="translate(973.00 175.70) scale(0.833 1)" x="2.85 8.55 14.25 19.95 25.66 31.36" y="0" font-size="10.1" fill="#c4c4c4" font-weight="normal">14,000</text><text class="l" transform="translate(973.00 201.10) scale(0.833 1)" x="2.85 8.55 14.25 19.95 25.66 31.36" y="0" font-size="10.1" fill="#c4c4c4" font-weight="normal">13,000</text><text class="l" transform="translate(973.00 226.50) scale(0.833 1)" x="2.85 8.55 14.25 19.95 25.66 31.36" y="0" font-size="10.1" fill="#c4c4c4" font-weight="normal">12,000</text><text class="l" transform="translate(973.00 252.00) scale(0.833 1)" x="2.85 8.55 14.25 19.95 25.66 31.36" y="0" font-size="10.1" fill="#c4c4c4" font-weight="normal">11,000</text><text class="l" transform="translate(973.00 277.60) scale(0.833 1)" x="2.85 8.55 14.25 19.95 25.66 31.36" y="0" font-size="10.1" fill="#c4c4c4" font-weight="normal">10,000</text><text class="l" transform="translate(973.00 303.40) scale(0.833 1)" x="2.85 8.55 14.25 19.95 25.66" y="0" font-size="10.1" fill="#c4c4c4" font-weight="normal">9,000</text><text class="l" transform="translate(973.00 328.00) scale(0.833 1)" x="2.85 8.55 14.25 19.95 25.66" y="0" font-size="10.1" fill="#c4c4c4" font-weight="normal">8,000</text><text class="l" transform="translate(973.00 353.30) scale(0.833 1)" x="2.85 8.55 14.25 19.95 25.66" y="0" font-size="10.1" fill="#c4c4c4" font-weight="normal">7,000</text><text class="l" transform="translate(973.00 378.80) scale(0.833 1)" x="2.85 8.55 14.25 19.95 25.66" y="0" font-size="10.1" fill="#c4c4c4" font-weight="normal">6,000</text></g>
<clipPath id="k3"><rect x="972" y="390.1" width="47" height="156.60000000000002"/></clipPath><g clip-path="url(#k3)"><text class="l" transform="translate(973.00 429.30) scale(0.833 1)" x="2.85 8.55 14.25 19.95 25.66 31.36" y="0" font-size="10.1" fill="#c4c4c4" font-weight="normal">15,000</text><text class="l" transform="translate(973.00 480.10) scale(0.833 1)" x="2.85 8.55 14.25 19.95 25.66 31.36" y="0" font-size="10.1" fill="#c4c4c4" font-weight="normal">12,500</text><text class="l" transform="translate(973.00 531.00) scale(0.833 1)" x="2.85 8.55 14.25 19.95 25.66 31.36" y="0" font-size="10.1" fill="#c4c4c4" font-weight="normal">10,000</text></g>
<text class="l" transform="translate(26.55 163.80) scale(0.825 1)" x="2.88 8.64" y="0" font-size="10.2" fill="#c4c4c4" font-weight="normal">10</text>
<text class="l" transform="translate(238.87 163.80) scale(0.825 1)" x="2.88 8.64" y="0" font-size="10.2" fill="#c4c4c4" font-weight="normal">11</text>
<text class="l" transform="translate(412.59 163.80) scale(0.825 1)" x="2.88 8.64" y="0" font-size="10.2" fill="#c4c4c4" font-weight="normal">12</text>
<text class="l" transform="translate(624.91 163.80) scale(0.825 1)" x="2.88 8.64" y="0" font-size="10.2" fill="#c4c4c4" font-weight="normal">01</text>
<text class="l" transform="translate(808.28 163.80) scale(0.825 1)" x="2.88 8.64" y="0" font-size="10.2" fill="#c4c4c4" font-weight="normal">02</text>
<text class="l" transform="translate(26.55 381.30) scale(0.825 1)" x="2.88 8.64" y="0" font-size="10.2" fill="#c4c4c4" font-weight="normal">10</text>
<text class="l" transform="translate(238.87 381.30) scale(0.825 1)" x="2.88 8.64" y="0" font-size="10.2" fill="#c4c4c4" font-weight="normal">11</text>
<text class="l" transform="translate(412.59 381.30) scale(0.825 1)" x="2.88 8.64" y="0" font-size="10.2" fill="#c4c4c4" font-weight="normal">12</text>
<text class="l" transform="translate(624.91 381.30) scale(0.825 1)" x="2.88 8.64" y="0" font-size="10.2" fill="#c4c4c4" font-weight="normal">01</text>
<text class="l" transform="translate(808.28 381.30) scale(0.825 1)" x="2.88 8.64" y="0" font-size="10.2" fill="#c4c4c4" font-weight="normal">02</text>
<text class="l" transform="translate(26.55 542.50) scale(0.825 1)" x="2.88 8.64" y="0" font-size="10.2" fill="#c4c4c4" font-weight="normal">10</text>
<text class="l" transform="translate(238.87 542.50) scale(0.825 1)" x="2.88 8.64" y="0" font-size="10.2" fill="#c4c4c4" font-weight="normal">11</text>
<text class="l" transform="translate(412.59 542.50) scale(0.825 1)" x="2.88 8.64" y="0" font-size="10.2" fill="#c4c4c4" font-weight="normal">12</text>
<text class="l" transform="translate(624.91 542.50) scale(0.825 1)" x="2.88 8.64" y="0" font-size="10.2" fill="#c4c4c4" font-weight="normal">01</text>
<text class="l" transform="translate(808.28 542.50) scale(0.825 1)" x="2.88 8.64" y="0" font-size="10.2" fill="#c4c4c4" font-weight="normal">02</text>
<text class="l" transform="translate(624.91 152.10) scale(0.830 1)" x="2.88 8.64 14.39 20.15" y="0" font-size="10.2" fill="#c4c4c4" font-weight="normal">2026</text>
<text class="l" transform="translate(624.91 369.60) scale(0.830 1)" x="2.88 8.64 14.39 20.15" y="0" font-size="10.2" fill="#c4c4c4" font-weight="normal">2026</text>
<text class="l" transform="translate(624.91 529.60) scale(0.830 1)" x="2.88 8.64 14.39 20.15" y="0" font-size="10.2" fill="#c4c4c4" font-weight="normal">2026</text>
<rect x="5.2" y="169" width="1013.8" height="3.2" fill="#f2f2f2"/>
<rect x="5.2" y="386.7" width="1013.8" height="3.4" fill="#f2f2f2"/>
<rect x="972" y="75" width="47" height="16.5" fill="#dadada"/>
<text class="l" transform="translate(981.10 85.45) scale(0.877 1)" x="2.79 8.38 13.97 19.56 25.15 30.74" y="0" font-size="9.9" fill="#000" font-weight="bold" stroke="#000" stroke-width="0.3">24,794</text>
<rect x="972" y="277" width="47" height="16.5" fill="#dadada"/>
<text class="l" transform="translate(983.55 287.45) scale(0.877 1)" x="2.79 8.38 13.97 19.56 25.15" y="0" font-size="9.9" fill="#000" font-weight="bold" stroke="#000" stroke-width="0.3">9,769</text>
<rect x="972" y="422" width="47" height="16.5" fill="#dadada"/>
<text class="l" transform="translate(981.10 432.45) scale(0.877 1)" x="2.79 8.38 13.97 19.56 25.15 30.74" y="0" font-size="9.9" fill="#000" font-weight="bold" stroke="#000" stroke-width="0.3">15,025</text>
<rect x="7" y="402.6" width="135.8" height="57.4" fill="#fff"/>
<text class="j" x="12.36 21.08 29.80 38.52 47.24 55.96 64.68 73.40 82.12" y="411.30" font-size="9.0" fill="#000" font-weight="normal">ボリンジャーバンド</text><text class="l" transform="translate(86.48 411.30) scale(0.805 1)" x="2.71" y="0" font-size="9.6" fill="#000" font-weight="normal">(</text><text class="j" x="95.20" y="411.30" font-size="9.0" fill="#000" font-weight="normal">金</text><text class="j" x="108.28 117.00" y="411.30" font-size="9.0" fill="#000" font-weight="normal">白金</text><text class="l" transform="translate(121.36 411.30) scale(0.805 1)" x="2.71" y="0" font-size="9.6" fill="#000" font-weight="normal">)</text><text class="j" x="130.08" y="411.30" font-size="9.0" fill="#000" font-weight="normal">△</text><text class="l" x="138.80" y="412.30" font-size="13.5" fill="#000">×</text>
<text class="j" x="20.76 29.48 38.20" y="420.80" font-size="9.0" fill="#000" font-weight="normal">基準線</text><text class="l" transform="translate(42.56 420.80) scale(0.805 1)" x="2.71 8.13 13.55 18.97 24.38 29.80 35.22 40.64 46.06 51.48 56.90 62.32 67.74 73.15 78.57 83.99 89.41 94.83 100.25 105.67 111.09 116.51" y="0" font-size="9.6" fill="#000" font-weight="normal">(21)(0)(SMA)(C):14,700</text>
<text class="j" x="20.76 29.48 38.20 46.92" y="430.30" font-size="9.0" fill="#000" font-weight="normal">幅１上限</text><text class="l" transform="translate(51.28 430.30) scale(0.805 1)" x="2.71 8.13 13.55 18.97 24.38 29.80" y="0" font-size="9.6" fill="#000" font-weight="normal">(+1.00</text><text class="l" x="81.80" y="430.50" font-size="10.6" fill="#000">σ</text><text class="l" transform="translate(86.16 430.30) scale(0.805 1)" x="2.71 8.13 13.55 18.97 24.38 29.80 35.22 40.64" y="0" font-size="9.6" fill="#000" font-weight="normal">):15,656</text>
<text class="j" x="20.76 29.48 38.20 46.92" y="439.80" font-size="9.0" fill="#000" font-weight="normal">幅１下限</text><text class="l" transform="translate(51.28 439.80) scale(0.805 1)" x="2.71 8.13 13.55 18.97 24.38 29.80" y="0" font-size="9.6" fill="#000" font-weight="normal">(-1.00</text><text class="l" x="81.80" y="440.00" font-size="10.6" fill="#000">σ</text><text class="l" transform="translate(86.16 439.80) scale(0.805 1)" x="2.71 8.13 13.55 18.97 24.38 29.80 35.22 40.64" y="0" font-size="9.6" fill="#000" font-weight="normal">):13,744</text>
<text class="j" x="20.76 29.48 38.20 46.92" y="449.30" font-size="9.0" fill="#000" font-weight="normal">幅２上限</text><text class="l" transform="translate(51.28 449.30) scale(0.805 1)" x="2.71 8.13 13.55 18.97 24.38 29.80" y="0" font-size="9.6" fill="#000" font-weight="normal">(+1.96</text><text class="l" x="81.80" y="449.50" font-size="10.6" fill="#000">σ</text><text class="l" transform="translate(86.16 449.30) scale(0.805 1)" x="2.71 8.13 13.55 18.97 24.38 29.80 35.22 40.64" y="0" font-size="9.6" fill="#000" font-weight="normal">):16,574</text>
<text class="j" x="20.76 29.48 38.20 46.92" y="458.80" font-size="9.0" fill="#000" font-weight="normal">幅２下限</text><text class="l" transform="translate(51.28 458.80) scale(0.805 1)" x="2.71 8.13 13.55 18.97 24.38 29.80" y="0" font-size="9.6" fill="#000" font-weight="normal">(-1.96</text><text class="l" x="81.80" y="459.00" font-size="10.6" fill="#000">σ</text><text class="l" transform="translate(86.16 458.80) scale(0.805 1)" x="2.71 8.13 13.55 18.97 24.38 29.80 35.22 40.64" y="0" font-size="9.6" fill="#000" font-weight="normal">):12,826</text>
<line x1="7.5" y1="417.3" x2="15.5" y2="417.3" stroke="#ff3030" stroke-width="1.2" />
<line x1="7.5" y1="426.8" x2="15.5" y2="426.8" stroke="#20d020" stroke-width="1.2" stroke-dasharray="2 1.2"/>
<line x1="7.5" y1="436.3" x2="15.5" y2="436.3" stroke="#20d020" stroke-width="1.2" stroke-dasharray="2 1.2"/>
<line x1="7.5" y1="445.8" x2="15.5" y2="445.8" stroke="#f0e000" stroke-width="1.2" />
<line x1="7.5" y1="455.3" x2="15.5" y2="455.3" stroke="#f0e000" stroke-width="1.2" /></g>
</svg>


<div id="botb"></div>
</div>
</body></html>
